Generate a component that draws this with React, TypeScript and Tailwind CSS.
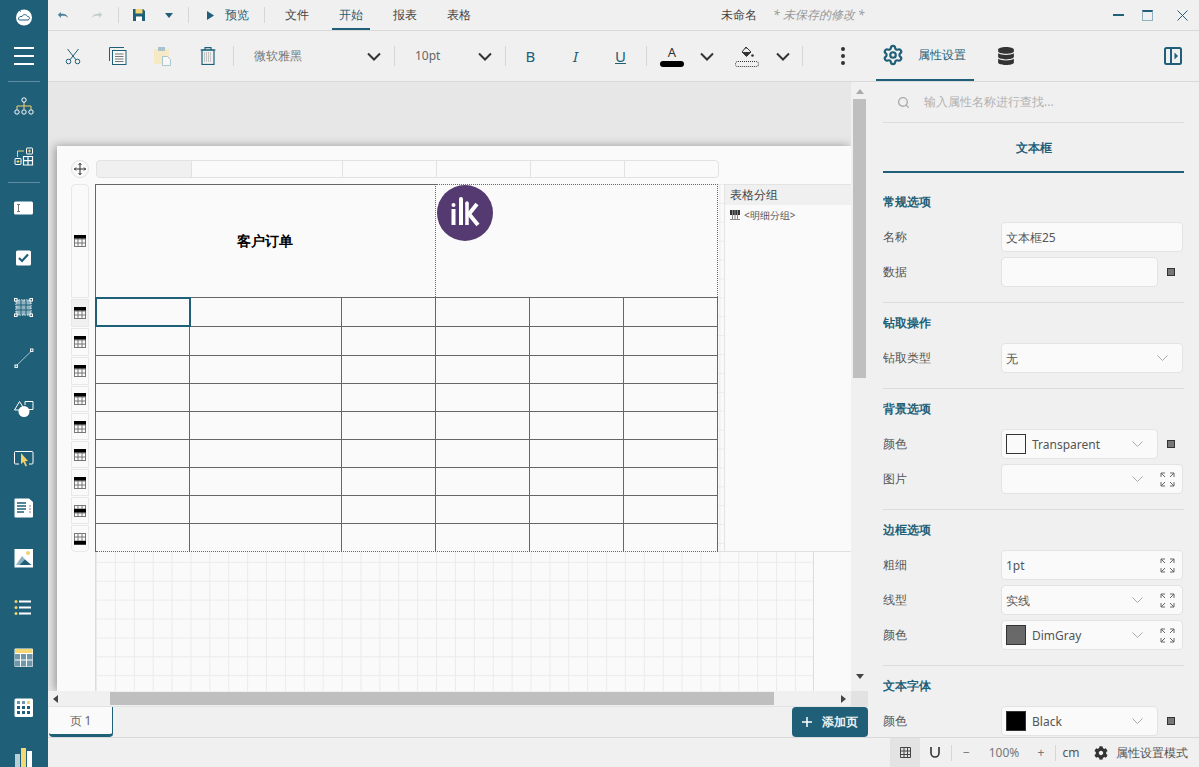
import { Search, Settings } from "lucide-react";
import { FaCog, FaDatabase } from "react-icons/fa";

const teal = "#1f5f78";

const Sep = ({ className = "" }: { className?: string }) => (
  <div className={`w-px bg-[#d6d6d6] shrink-0 ${className}`} />
);

const Chev = ({ color = "#333" }: { color?: string }) => (
  <svg width="14" height="9" viewBox="0 0 14 9" className="shrink-0">
    <path d="M1 1.500 7 7.500 13 1.500" fill="none" stroke={color} strokeWidth="2" />
  </svg>
);

const ThinChev = () => (
  <svg width="11" height="6" viewBox="0 0 11 6" className="shrink-0">
    <path d="M.5.500 5.500 5.500 10.500.500" fill="none" stroke="#aaa" strokeWidth="1" />
  </svg>
);

const Expand = () => (
  <svg width="15" height="15" viewBox="0 0 15 15" className="shrink-0" fill="none" stroke="#666" strokeWidth="1">
    <path d="M1 5V1h4M1 1l4 4M14 5V1h-4M14 1l-4 4M1 10v4h4M1 14l4-4M14 10v4h-4M14 14l-4-4" />
  </svg>
);

/* sidebar icons, all on a 20x20 box */
const sideIcons = [
  <g key="org">
    <path d="M10 5v4M3 12.500V9h14v3.500M10 9v3.500" stroke="#f2d06b" fill="none" />
    <g fill="none" stroke="#fff">
      <circle cx="10" cy="3" r="2.200" />
      <circle cx="3" cy="15" r="2.200" />
      <circle cx="10" cy="15" r="2.200" />
      <circle cx="17" cy="15" r="2.200" />
    </g>
  </g>,
  <g key="add">
    <path d="M3.500 10V4H10" stroke="#f2d06b" fill="none" />
    <g fill="none" stroke="#fff">
      <rect x="12.500" y="1" width="6" height="6" rx=".5" />
      <rect x="1" y="11.500" width="6" height="6" rx=".5" />
      <path d="M9.500 9.500h9v8.500h-9zM14 9.500V18M9.500 13.700h9" strokeWidth="1.200" />
    </g>
    <path d="M14 4h3M15.500 2.500v3M2.500 14.500h3M4 13v3" stroke="#f2d06b" />
  </g>,
  <g key="text">
    <rect x="0" y="3.500" width="19" height="13" rx="1.500" fill="#fff" />
    <path d="M3 6.500h3M3 13.500h3M4.500 6.500v7" stroke="#777" />
  </g>,
  <g key="check">
    <rect x="2" y="2.500" width="15" height="15" rx="1.500" fill="#fff" />
    <path d="M5 10l3 3 6-6.500" stroke={teal} strokeWidth="2.200" fill="none" />
  </g>,
  <g key="select">
    <rect x="2" y="2" width="15" height="15" fill="#8fb2c1" stroke="#fff" strokeDasharray="1.500 1" />
    <path d="M7 2v15M12 2v15M2 7h15M2 12h15" stroke={teal} />
    <g fill={teal} stroke="#fff">
      <rect x=".5" y=".5" width="2.500" height="2.500" />
      <rect x="16" y=".5" width="2.500" height="2.500" />
      <rect x=".5" y="16" width="2.500" height="2.500" />
      <rect x="16" y="16" width="2.500" height="2.500" />
    </g>
  </g>,
  <g key="line">
    <path d="M2 18 17.500 3" stroke="#a9c4cf" />
    <rect x="1" y="17" width="2.400" height="2.400" fill={teal} stroke="#fff" />
    <rect x="16.500" y="1" width="2.400" height="2.400" fill={teal} stroke="#fff" />
  </g>,
  <g key="shapes">
    <path d="M.5 12 5.500 3.500 9 9" fill="none" stroke="#fff" />
    <path d="M.5 12H5" stroke="#fff" />
    <path d="M11 3.500h8v8h-4" fill="none" stroke="#fff" />
    <path d="M11 3.500V7" stroke="#fff" />
    <circle cx="10" cy="13.500" r="5.500" fill="#fff" />
  </g>,
  <g key="cursor">
    <path d="M5 16H1.500a1 1 0 0 1-1-1V4.500a1 1 0 0 1 1-1H5M12 3.500h6a1 1 0 0 1 1 1V15a1 1 0 0 1-1 1h-3" fill="none" stroke="#fff" />
    <rect x="4" y="3" width="9" height="1" fill="#fff" />
    <path d="M7 5v11l2.500-2 2 4.500 1.500-.7-2-4.500 3-.3z" fill="#f2d06b" />
  </g>,
  <g key="doc">
    <path d="M1.500.500H15l4 3.500v14.500a1 1 0 0 1-1 1H1.500a1 1 0 0 1-1-1V1.500a1 1 0 0 1 1-1z" fill="#fff" />
    <path d="M3 5h9M3 8h9M3 11h9M3 14h7" stroke={teal} strokeWidth="1.500" />
    <path d="M15 8h2M15 11h2M15 14h2" stroke="#aaa" strokeWidth="1.500" />
  </g>,
  <g key="img">
    <rect x=".5" y="1" width="18.500" height="18.500" fill="#fff" />
    <circle cx="14" cy="5" r="2" fill="#f2d06b" />
    <path d="M2 17 8 8l4.500 5L18 17z" fill="#8fb2c1" />
    <path d="M5.500 17 11 11.500l6 5.500z" fill={teal} />
  </g>,
  <g key="list">
    <circle cx="2" cy="3.500" r="1.500" fill="#f2d06b" />
    <circle cx="2" cy="9.500" r="1.500" fill="#f2d06b" />
    <circle cx="2" cy="15.500" r="1.500" fill="#f2d06b" />
    <path d="M5 3.500h12M5 9.500h12M5 15.500h12" stroke="#fff" strokeWidth="2" />
  </g>,
  <g key="table">
    <rect x=".5" y=".5" width="18.500" height="18.500" rx="1" fill="#fff" />
    <rect x="1" y="1" width="17.500" height="4" fill="#f6d873" />
    <rect x="1" y="6" width="17.500" height="12.500" fill="#6e97a9" />
    <path d="M6.500 6v12.500M12.500 6v12.500M1 12h17.500" stroke="#fff" />
  </g>,
  <g key="matrix">
    <rect x=".5" y=".5" width="18.500" height="18.500" rx="1.500" fill="#fff" />
    <g fill={teal}>
      <rect x="3" y="3" width="3" height="3" fill="#6e97a9" />
      <rect x="8" y="3" width="3" height="3" fill="#6e97a9" />
      <rect x="13" y="3" width="3" height="3" fill="#f2d06b" />
      <rect x="3" y="8" width="3" height="3" />
      <rect x="8" y="8" width="3" height="3" />
      <rect x="13" y="8" width="3" height="3" />
      <rect x="3" y="13" width="3" height="3" />
      <rect x="8" y="13" width="3" height="3" />
      <rect x="13" y="13" width="3" height="3" />
    </g>
  </g>,
  <g key="chart">
    <rect x="1" y="6" width="5" height="14" fill="#b9cfd8" />
    <rect x="7" y="0" width="5" height="20" fill="#f6d873" />
    <rect x="13" y="3" width="5" height="17" fill="#fff" />
  </g>,
];

const SideIcon = ({ index }: { index: number }) => (
  <div className="h-[50px] flex items-center justify-center shrink-0">
    <svg width="20" height="20" viewBox="0 0 20 20">
      {sideIcons[index]}
    </svg>
  </div>
);

const Sidebar = () => (
  <div className="w-12 shrink-0 bg-[#1f5f78] flex flex-col overflow-hidden">
    <div className="h-[31px] shrink-0 flex items-center justify-center pt-[3px]">
      <svg width="18" height="18" viewBox="0 0 18 18">
        <circle cx="9" cy="9.500" r="8" fill="#fff" />
        <path d="M3.500 1.500 6 3.500M3.500 11c0-2 2-3 3.500-2.500C8 6 11.500 6 12.500 8.500c2-.5 3 2.500.5 3.500H6c-1.500 0-2.500 0-2.500-1z" fill="none" stroke={teal} strokeWidth="1" />
      </svg>
    </div>
    <div className="h-[50px] shrink-0 flex flex-col items-center justify-center gap-[6px]">
      <div className="w-5 h-[2px] bg-white" />
      <div className="w-5 h-[2px] bg-white" />
      <div className="w-5 h-[2px] bg-white" />
    </div>
    <div className="h-px mx-2 shrink-0 bg-[#5d8ba0]" />
    <SideIcon index={0} />
    <SideIcon index={1} />
    <div className="h-px mx-2 shrink-0 bg-[#5d8ba0]" />
    {sideIcons.slice(2).map((_, i) => (
      <SideIcon key={i} index={i + 2} />
    ))}
  </div>
);

const TitleBar = () => (
  <div className="h-[31px] shrink-0 flex items-center border-b border-[#d9d9d9] bg-[#f0f0f0] text-xs text-[#555]">
    <div className="w-[30px] flex justify-center">
      <svg width="12" height="9" viewBox="0 0 14 10"><path d="M1 4 4.500 1v2C9 2.500 12 4 13 8 11 5.500 8.500 5 4.500 5.500V8z" fill="#4d7f95" /></svg>
    </div>
    <div className="w-[30px] ml-1 flex justify-center">
      <svg width="12" height="9" viewBox="0 0 14 10"><path d="M13 4 9.500 1v2C5 2.500 2 4 1 8c2-2.500 4.500-3 8.500-2.500V8z" fill="#c4ccd0" /></svg>
    </div>
    <Sep className="h-4 ml-[6px]" />
    <div className="w-10 flex justify-center">
      <svg width="12" height="12" viewBox="0 0 12 12">
        <path d="M0 0h10l2 2v10H0z" fill={teal} />
        <rect x="2.500" y="0" width="7" height="4.500" fill="#f4d674" />
        <rect x="3" y="7.500" width="6" height="4.500" fill="#fff" />
      </svg>
    </div>
    <div className="w-5 flex justify-center">
      <svg width="8" height="5" viewBox="0 0 8 5"><path d="M0 0h8L4 5z" fill={teal} /></svg>
    </div>
    <Sep className="h-4 ml-[9px]" />
    <div className="w-9 flex justify-end pr-[11px]">
      <svg width="7" height="9" viewBox="0 0 7 9"><path d="M0 0 7 4.500 0 9z" fill={teal} /></svg>
    </div>
    <span className="text-[#1f5f78] w-[25px]">预览</span>
    <Sep className="h-4 ml-[14px] mr-[5px]" />
    <div className="w-[54px] text-center text-[#444]">文件</div>
    <div className="w-[54px] h-full relative flex items-center justify-center text-[#1f5f78]">
      开始
      <div className="absolute bottom-0 left-2 right-2 h-[2px] bg-[#1f5f78]" />
    </div>
    <div className="w-[54px] text-center text-[#444]">报表</div>
    <div className="w-[54px] text-center text-[#444]">表格</div>
    <span className="ml-[235px] text-[#444]">未命名</span>
    <span className="ml-4 italic text-[#999]">* 未保存的修改 *</span>
    <div className="ml-auto flex items-center pr-[11px]">
      <div className="w-[11px] h-[2px] bg-[#1f5f78]" />
      <div className="w-[11px] h-[11px] ml-[18px] border border-[#8fb2c1] border-t-2 border-t-[#1f5f78]" />
      <svg width="11" height="11" viewBox="0 0 11 11" className="ml-[24px]">
        <path d="M.5.500l10 10M10.500.500l-10 10" stroke={teal} />
      </svg>
    </div>
  </div>
);

const Ribbon = () => (
  <div className="h-[51px] flex items-center border-b border-[#d9d9d9] bg-[#f0f0f0] text-xs">
    <div className="w-[2px]" />
    <div className="w-[45px] flex justify-center">
      <svg width="16" height="17" viewBox="0 0 16 17" fill="none" stroke={teal}>
        <circle cx="3.500" cy="13.500" r="2.300" />
        <circle cx="12.500" cy="13.500" r="2.300" />
        <path d="M5 11.800 13.500 1M11 11.800 2.500 1" />
      </svg>
    </div>
    <div className="w-[45px] flex justify-center">
      <svg width="18" height="18" viewBox="0 0 18 18" fill="none" stroke={teal}>
        <path d="M.5 14V.500H15" />
        <rect x="3.500" y="3.500" width="13.500" height="14" fill="#f7f7f7" />
        <path d="M6 7h8.500M6 9.500h8.500M6 12h8.500M6 14.500h8.500" stroke="#777" />
      </svg>
    </div>
    <div className="w-[45px] flex justify-center">
      <svg width="18" height="19" viewBox="0 0 18 19">
        <rect x="0" y="2" width="15" height="15" fill="#f6e9c5" />
        <rect x="4" y="0" width="7" height="4" fill="#a9c4cf" />
        <path d="M8.500 9.500h5l3 3v6h-8z" fill="#f7f7f7" stroke="#a9c4cf" />
      </svg>
    </div>
    <div className="w-[45px] flex justify-center">
      <svg width="16" height="18" viewBox="0 0 16 18" fill="none" stroke={teal}>
        <path d="M.5 3h15M5 3V.700h6V3" strokeWidth="1.200" />
        <rect x="2" y="3" width="12" height="14.500" strokeWidth="1.200" />
        <path d="M4.500 5.500v10M6.500 5.500v10M8.500 5.500v10M10.500 5.500v10" stroke="#999" strokeDasharray="1 1" />
      </svg>
    </div>
    <Sep className="h-5 ml-[3px]" />
    <div className="w-[160px] flex items-center pl-5 pr-[13px]">
      <span className="text-[#777]">微软雅黑</span>
      <div className="ml-auto"><Chev /></div>
    </div>
    <Sep className="h-5" />
    <div className="w-[110px] flex items-center pl-5 pr-[13px]">
      <span className="text-[#666]">10pt</span>
      <div className="ml-auto"><Chev /></div>
    </div>
    <Sep className="h-5" />
    <div className="w-[2px]" />
    <div className="w-[45px] text-center text-[15px] text-[#1f5f78]">B</div>
    <div className="w-[45px] text-center text-[15px] italic text-[#1f5f78]">I</div>
    <div className="w-[45px] text-center text-[15px] underline text-[#1f5f78]">U</div>
    <Sep className="h-5 ml-[3px]" />
    <div className="w-[50px] flex flex-col items-center">
      <span className="text-[13px] leading-[13px] text-[#333]">A</span>
      <div className="w-6 h-[6px] mt-[2px] rounded-sm bg-black" />
    </div>
    <div className="w-5 flex justify-center"><Chev /></div>
    <div className="w-[5px]" />
    <div className="w-[50px] flex flex-col items-center">
      <svg width="13" height="13" viewBox="0 0 13 13">
        <path d="M5 1 10 6 5.500 10.500 1 6z" fill="#f0f0f0" stroke="#333" />
        <path d="M1.500 6h8L5.500 10.500z" fill="#333" />
        <path d="M5 1V3" stroke="#333" />
        <circle cx="11.500" cy="9.500" r="1.300" fill="#333" />
      </svg>
      <div className="w-6 h-[6px] mt-[2px] rounded-sm border border-dotted border-[#333]" />
    </div>
    <div className="w-[21px] flex justify-center"><Chev /></div>
    <Sep className="h-5 ml-[9px]" />
    <div className="flex-1 flex flex-col items-center gap-[3px] pl-[15px]">
      <div className="w-1 h-1 rounded-full bg-[#333]" />
      <div className="w-1 h-1 rounded-full bg-[#333]" />
      <div className="w-1 h-1 rounded-full bg-[#333]" />
    </div>
  </div>
);

const TableGlyph = ({ band = "top" }: { band?: "top" | "middle" | "bottom" }) => (
  <svg width="12" height="12" viewBox="0 0 12 12" className="shrink-0">
    <rect x=".5" y=".5" width="11" height="11" fill="#fafafa" stroke="#777" />
    <path d="M4 0v12M8 0v12M0 4h12M0 8h12" stroke="#777" />
    {band === "top" && <rect x="0" y="0" width="12" height="3.500" fill="#000" />}
    {band === "middle" && <rect x="0" y="4" width="12" height="3.500" fill="#000" />}
    {band === "bottom" && <rect x="0" y="8" width="12" height="3.500" fill="#000" />}
  </svg>
);

const rows: { h: string; handle: string; band: "top" | "middle" | "bottom" }[] = [
  { h: "h-[29px]", handle: "h-[28px] bg-[#f0f0f0]", band: "top" },
  { h: "h-[29px]", handle: "h-[28px]", band: "top" },
  { h: "h-[28px]", handle: "h-[28px]", band: "top" },
  { h: "h-[28px]", handle: "h-[26px]", band: "top" },
  { h: "h-[28px]", handle: "h-[27px]", band: "top" },
  { h: "h-[28px]", handle: "h-[27px]", band: "top" },
  { h: "h-[28px]", handle: "h-[27px]", band: "top" },
  { h: "h-[28px]", handle: "h-[27px]", band: "middle" },
  { h: "h-[28px]", handle: "h-[27px]", band: "bottom" },
];

const colHandles = ["w-[96px] bg-[#f0f0f0] rounded-l", "w-[152px]", "w-[95px]", "w-[95px]", "w-[95px]", "w-[95px] rounded-r"];

const Logo = () => (
  <svg width="56" height="56" viewBox="0 0 56 56" className="ml-px">
    <circle cx="28" cy="28" r="28" fill="#553a72" />
    <g stroke="#fff" fill="none">
      <path d="M16.500 24v16" strokeWidth="4" />
      <path d="M24 14v26" strokeWidth="4" />
      <path d="M30 18v22" strokeWidth="3.500" />
      <path d="M40 19 32 29l9 11" strokeWidth="4" />
    </g>
    <circle cx="16.500" cy="20" r="2" fill="#fff" />
    <circle cx="24" cy="14" r="2" fill="#fff" />
    <circle cx="30" cy="18" r="1.750" fill="#fff" />
  </svg>
);

const Surface = () => (
  <div className="relative flex-none w-[719px] h-[510px] border-x border-[#dcdcdc] bg-[linear-gradient(to_right,#ebebeb_1px,transparent_1px),linear-gradient(to_bottom,#ebebeb_1px,transparent_1px)] bg-size-[18.9px_18.9px]">
    <div className="-ml-px w-[623px] border-l border-[#666] bg-[#fafafa]">
      <div className="h-[114px] flex border-b border-[#666]">
        <div className="w-[340px] border-t border-t-[#666] border-r border-r-[#666] [border-right-style:dotted] flex items-center justify-center pr-[2px]">
          <span className="text-[13.5px] font-bold text-black">客户订单</span>
        </div>
        <div className="w-[282px] border-t border-r border-dotted border-[#666]">
          <Logo />
        </div>
      </div>
      {rows.map((r, i) => (
        <div key={i} className={`${r.h} grid grid-cols-[94px_152px_94px_94px_94px_94px] border-b border-[#666] ${i === 8 ? "border-dotted" : ""}`}>
          {[0, 1, 2, 3, 4, 5].map((c) => (
            <div key={c} className="relative border-r border-[#666]">
              {i === 0 && c === 0 && (
                <div className="absolute -left-px -top-px w-[96px] h-[30px] border-2 border-[#1f5f78]" />
              )}
            </div>
          ))}
        </div>
      ))}
    </div>
    <div className="absolute left-[622px] top-0 w-[228px] h-[368px] flex pl-[6px] border-b border-[#e0e0e0]">
      <div className="flex-1 bg-[#fafafa] border-l border-t border-[#e3e3e3]">
        <div className="h-5 flex items-center pl-[5px] bg-[#f0f0f0] text-xs text-[#444]">表格分组</div>
        <div className="flex items-center mt-[4px] pl-[5px] gap-[4px] text-[10px] leading-[12px] text-[#555]">
          <svg width="10" height="10" viewBox="0 0 10 10">
            <rect width="10" height="5" fill="#333" />
            <path d="M2.500 0v10M5 0v10M7.500 0v10" stroke="#888" />
            <path d="M0 9.500h10" stroke="#888" />
          </svg>
          {"<明细分组>"}
        </div>
      </div>
    </div>
  </div>
);

const Canvas = () => (
  <div className="h-[609px] flex shrink-0">
    <div className="w-[803px] h-full bg-[#e7e7e7] pl-[9px] pt-16 overflow-hidden">
      <div className="h-full bg-[#fafafa] shadow-[-2px_0_9px_rgba(0,0,0,0.35)] pt-[14px] overflow-hidden">
        <div className="flex h-[18px]">
          <div className="w-[18px] h-[18px] ml-[14px] rounded-full border border-[#e2e2e2] flex items-center justify-center">
            <svg width="12" height="12" viewBox="0 0 12 12" fill="none" stroke="#333">
              <path d="M6 0v12M0 6h12" />
              <path d="M4.500 2 6 .500 7.500 2M4.500 10 6 11.500 7.500 10M2 4.500.500 6 2 7.500M10 4.500 11.500 6 10 7.500" />
            </svg>
          </div>
          <div className="flex ml-[7px]">
            {colHandles.map((c, i) => (
              <div key={i} className={`${c} h-[18px] border border-[#e2e2e2] -mr-px`} />
            ))}
          </div>
        </div>
        <div className="flex mt-[6px]">
          <div className="w-[18px] ml-[14px] flex flex-col gap-px">
            <div className="h-[114px] border border-[#e8e8e8] rounded-t flex items-center justify-center">
              <TableGlyph />
            </div>
            {rows.map((r, i) => (
              <div key={i} className={`${r.handle} border border-[#e8e8e8] flex items-center justify-center ${i === 8 ? "rounded-b" : ""}`}>
                <TableGlyph band={r.band} />
              </div>
            ))}
          </div>
          <div className="w-[6px]" />
          <Surface />
        </div>
      </div>
    </div>
    <div className="w-[17px] bg-[#f0f0f0] flex flex-col items-center">
      <svg width="8" height="5" viewBox="0 0 8 5" className="mt-[7px]"><path d="M0 5h8L4 0z" fill="#aaa" /></svg>
      <div className="w-[13px] h-[279px] mt-[5px] bg-[#bfbfbf]" />
      <svg width="8" height="5" viewBox="0 0 8 5" className="mt-[296px]"><path d="M0 0h8L4 5z" fill="#444" /></svg>
    </div>
  </div>
);

const HScroll = () => (
  <div className="h-[15px] shrink-0 flex items-center bg-[#f0f0f0]">
    <svg width="5" height="8" viewBox="0 0 5 8" className="ml-[5px]"><path d="M5 0v8L0 4z" fill="#444" /></svg>
    <div className="w-[664px] h-[13px] ml-[52px] bg-[#bfbfbf]" />
    <svg width="5" height="8" viewBox="0 0 5 8" className="ml-[67px]"><path d="M0 0v8l5-4z" fill="#444" /></svg>
    <div className="ml-auto w-[17px] h-full bg-[#e2e2e2]" />
  </div>
);

const PageTabs = () => (
  <div className="h-[31px] shrink-0 flex items-end justify-between bg-[#f0f0f0] border-t border-[#e3e3e3]">
    <div className="ml-px w-[64px] h-[30px] flex items-center justify-center bg-[#fafafa] border-r border-b-[3px] border-[#1f5f78] rounded-b-sm text-xs text-[#666]">
      页 1
    </div>
    <div className="w-[76px] h-[30px] flex items-center justify-center gap-[10px] bg-[#1f5f78] rounded-sm text-xs font-bold text-[#f2f2f2]">
      <svg width="10" height="10" viewBox="0 0 10 10"><path d="M5 0v10M0 5h10" stroke="#fff" strokeWidth="1.500" /></svg>
      添加页
    </div>
  </div>
);

const Square = () => <div className="w-2 h-2 ml-[9px] bg-[#777] border border-[#333] shrink-0" />;

type FieldProps = {
  label: string;
  value?: string;
  swatch?: string;
  chevron?: boolean;
  expand?: boolean;
  square?: boolean;
  wide?: boolean;
};

const Field = ({ label, value, swatch, chevron, expand, square, wide }: FieldProps) => (
  <div className="h-[30px] flex items-center">
    <div className="w-[118px] text-xs text-[#555]">{label}</div>
    <div className={`${wide ? "w-[182px]" : "w-[157px]"} h-[30px] flex items-center pl-[4px] bg-[#fafafa] border border-[#e3e3e3] rounded-sm text-xs text-[#555]`}>
      {swatch && <div className={`${swatch} w-5 h-5 mr-[6px] border border-[#333] shrink-0`} />}
      <span className="pt-px">{value}</span>
      <div className="ml-auto flex items-center">
        {chevron && <div className={expand ? "mr-[17px]" : "mr-[14px]"}><ThinChev /></div>}
        {expand && <div className="mr-[7px]"><Expand /></div>}
      </div>
    </div>
    {square && <Square />}
  </div>
);

const Section = ({ title, first, children }: { title: string; first?: boolean; children: React.ReactNode }) => (
  <div className={first ? "pt-[18px] pb-[15px] border-b border-[#dcdcdc]" : "pt-[9px] pb-[15px] border-b border-[#dcdcdc]"}>
    <div className="h-5 flex items-center pt-px text-xs font-bold text-[#1f5f78]">{title}</div>
    <div className="mt-[11px] flex flex-col gap-[5px]">{children}</div>
  </div>
);

const Panel = () => (
  <div className="flex-1 flex flex-col min-w-0 bg-[#f0f0f0]">
    <div className="h-[51px] shrink-0 flex items-center border-b border-[#d9d9d9] pl-2">
      <div className="w-[98px] h-[50px] flex items-center gap-[14px] pl-[6px] border-b-2 border-[#1f5f78] text-xs text-[#1f5f78]">
        <Settings size={22} color={teal} strokeWidth={2.4} />
        属性设置
      </div>
      <div className="ml-[23px]"><FaDatabase size={18} color="#333" /></div>
      <svg width="18" height="18" viewBox="0 0 18 18" className="ml-auto mr-[17px]" fill="none" stroke={teal} strokeWidth="2">
        <rect x="1" y="1" width="16" height="16" rx="1.500" />
        <path d="M7 1v16" />
        <path d="M10.500 5.500 14 9l-3.500 3.500z" fill={teal} stroke="none" />
      </svg>
    </div>
    <div className="mx-[15px] h-[41px] shrink-0 flex items-center pl-[14px] border-b border-[#dcdcdc] text-xs text-[#b0b0b0]">
      <Search size={13} color="#aaa" strokeWidth={2.5} />
      <span className="ml-[14px]">输入属性名称进行查找...</span>
    </div>
    <div className="mx-[15px] h-[50px] shrink-0 flex items-center justify-center pt-[2px] border-b-2 border-[#1f5f78] text-xs font-bold text-[#1f5f78]">
      文本框
    </div>
    <div className="mx-[15px] flex-1 overflow-hidden">
      <Section title="常规选项" first>
        <Field label="名称" value="文本框25" wide />
        <Field label="数据" square />
      </Section>
      <Section title="钻取操作">
        <Field label="钻取类型" value="无" chevron wide />
      </Section>
      <Section title="背景选项">
        <Field label="颜色" value="Transparent" swatch="bg-transparent" chevron square />
        <Field label="图片" chevron expand wide />
      </Section>
      <Section title="边框选项">
        <Field label="粗细" value="1pt" expand wide />
        <Field label="线型" value="实线" chevron expand wide />
        <Field label="颜色" value="DimGray" swatch="bg-[#696969]" chevron expand wide />
      </Section>
      <Section title="文本字体">
        <Field label="颜色" value="Black" swatch="bg-black" chevron square />
      </Section>
    </div>
  </div>
);

const StatusBar = () => (
  <div className="h-[30px] shrink-0 flex items-center justify-end pr-[11px] bg-[#f0f0f0] border-t border-[#d9d9d9] text-xs text-[#555]">
    <div className="w-[30px] h-full flex items-center justify-center bg-[#e3e3e3]">
      <svg width="11" height="11" viewBox="0 0 11 11" fill="none" stroke="#444">
        <path d="M.5.500h10v10H.5zM4 .500v10M7.500.500v10M.5 4h10M.5 7.500h10" />
      </svg>
    </div>
    <div className="w-[30px] flex justify-center">
      <svg width="10" height="11" viewBox="0 0 10 11" fill="none" stroke="#333" strokeWidth="1.600">
        <path d="M1 0v6a4 4 0 0 0 8 0V0" />
      </svg>
    </div>
    <Sep className="h-4 ml-px" />
    <div className="w-[29px] text-center text-[#777]">−</div>
    <div className="w-[46px] text-center text-[#777]">100%</div>
    <div className="w-[28px] text-center text-[#777]">+</div>
    <Sep className="h-4" />
    <div className="w-[30px] text-center">cm</div>
    <div className="ml-[8px] mr-[8px]"><FaCog size={14} color="#333" /></div>
    <span>属性设置模式</span>
  </div>
);

export default function App() {
  return (
    <div className="w-[1199px] h-[767px] flex overflow-hidden bg-[#f0f0f0] font-['Open_Sans','Noto_Sans_CJK_SC',sans-serif]">
      <Sidebar />
      <div className="flex-1 flex flex-col min-w-0">
        <TitleBar />
        <div className="h-[706px] flex shrink-0">
          <div className="w-[820px] flex flex-col shrink-0">
            <Ribbon />
            <Canvas />
            <HScroll />
            <PageTabs />
          </div>
          <Panel />
        </div>
        <StatusBar />
      </div>
    </div>
  );
}
